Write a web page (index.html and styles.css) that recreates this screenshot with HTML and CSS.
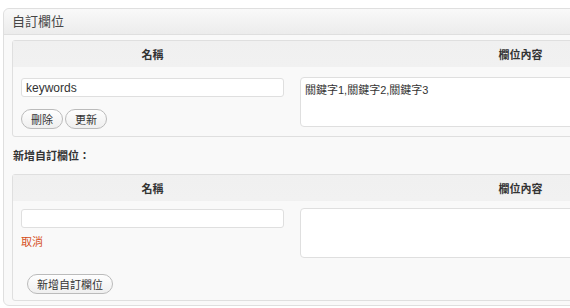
FILE: index.html
```html
<!DOCTYPE html>
<html lang="zh-Hant">

<head>
    <meta charset="UTF-8">
    <title>自訂欄位</title>
    <link rel="stylesheet" href="styles.css">
</head>

<body>

    <div class="page">
        <div class="postbox">
            <h3 class="postboxTitle">自訂欄位</h3>
            <div class="inside">

                <table class="metaTable">
                    <thead>
                        <tr>
                            <th class="nameCol">名稱</th>
                            <th>欄位內容</th>
                        </tr>
                    </thead>
                    <tbody>
                        <tr>
                            <td class="nameCell">
                                <input class="textInput" type="text" value="keywords">
                                <div class="buttonRow">
                                    <button class="pillButton">刪除</button>
                                    <button class="pillButton">更新</button>
                                </div>
                            </td>
                            <td class="valueCell">
                                <textarea class="valueInput">關鍵字1,關鍵字2,關鍵字3</textarea>
                            </td>
                        </tr>
                    </tbody>
                </table>

                <h4 class="addTitle">新增自訂欄位：</h4>

                <table class="metaTable">
                    <thead>
                        <tr>
                            <th class="nameCol">名稱</th>
                            <th>欄位內容</th>
                        </tr>
                    </thead>
                    <tbody>
                        <tr>
                            <td class="nameCell newCell">
                                <input class="textInput" type="text" value="">
                                <a class="cancelLink" href="#">取消</a>
                            </td>
                            <td class="valueCell newCell">
                                <textarea class="valueInput"></textarea>
                            </td>
                        </tr>
                        <tr>
                            <td class="submitCell" colspan="2">
                                <button class="pillButton">新增自訂欄位</button>
                            </td>
                        </tr>
                    </tbody>
                </table>

            </div>
        </div>
    </div>

</body>

</html>
```

FILE: styles.css
```css
body,
html {
    margin: 0;
    padding: 0;
}

body {
    font-family: "Liberation Sans", "Noto Sans CJK TC", sans-serif;
    background-color: #fff;
    color: #333;
    overflow: hidden;
}

.page {
    width: 760px;
    padding: 8px 0 0 3px;
}

.postbox {
    border: 1px solid #dfdfdf;
    border-radius: 6px;
    background-color: #f9f9f9;
}

.postboxTitle {
    margin: 0;
    height: 25px;
    padding-left: 8px;
    line-height: 25px;
    font-size: 13px;
    font-weight: normal;
    color: #464646;
    background: linear-gradient(#f9f9f9, #ececec);
    border-bottom: 1px solid #dfdfdf;
    border-radius: 6px 6px 0 0;
}

.inside {
    padding: 5px 8px 4px 8px;
}

.metaTable {
    width: 737px;
    border: 1px solid #dfdfdf;
    border-radius: 3px;
    border-spacing: 0;
    background-color: #f9f9f9;
}

.metaTable th {
    height: 26px;
    padding: 0;
    font-size: 11px;
    font-weight: bold;
    color: #333;
    text-align: center;
    background: linear-gradient(#f0f0f0, #f1f1f1);
}

.nameCol {
    width: 279px;
}

.nameCell,
.valueCell {
    vertical-align: top;
    padding: 11px 8px 7px 8px;
}

.newCell {
    padding-top: 8px;
}

.textInput {
    display: block;
    box-sizing: border-box;
    width: 263px;
    height: 19px;
    margin: 0;
    padding: 0 4px;
    font-family: inherit;
    font-size: 12px;
    color: #333;
    background-color: #fff;
    border: 1px solid #dfdfdf;
    border-radius: 3px;
    outline: none;
}

.valueInput {
    display: block;
    box-sizing: border-box;
    width: 441px;
    height: 50px;
    margin: -1px 0 0 0;
    padding: 3px 4px;
    font-family: inherit;
    font-size: 11px;
    color: #333;
    background-color: #fff;
    border: 1px solid #dfdfdf;
    border-radius: 4px;
    resize: none;
    outline: none;
}

.buttonRow {
    display: flex;
    gap: 2px;
    margin-top: 12px;
}

.pillButton {
    height: 20px;
    padding: 0 9px;
    font-family: inherit;
    font-size: 11px;
    color: #333;
    background: linear-gradient(#fefefe, #efefef);
    border: 1px solid #bbb;
    border-radius: 11px;
    cursor: pointer;
}

.addTitle {
    margin: 12px 0 11px 1px;
    font-size: 11px;
    line-height: 14px;
    font-weight: bold;
    color: #333;
}

.cancelLink {
    display: block;
    margin-top: 7px;
    font-size: 11px;
    line-height: 14px;
    color: #d54e21;
    text-decoration: none;
}

.submitCell {
    padding: 9px 14px 6px 14px;
}
```
